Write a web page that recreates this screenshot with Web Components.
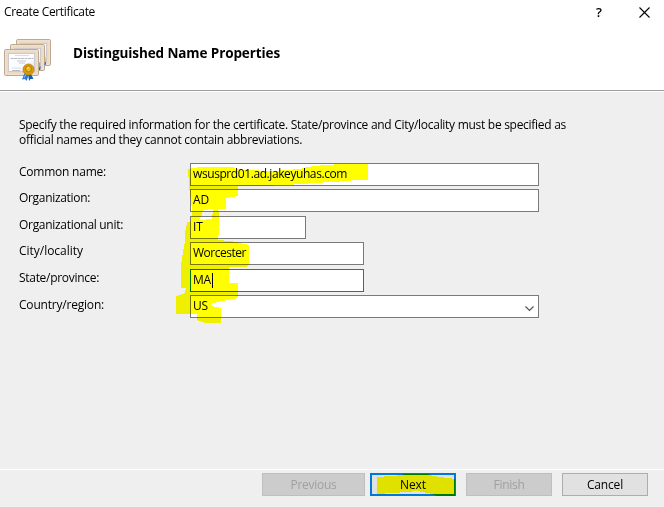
<!DOCTYPE html>
<html lang="en">
<head>
<meta charset="utf-8">
<title>Create Certificate</title>
<style>
html,body{margin:0;width:664px;height:507px;overflow:hidden}
body{font:12px/16px "Open Sans","Noto Sans",sans-serif;color:#000}
</style>
</head>
<body>
<cert-dialog></cert-dialog>
<script>
// Single line of text, tracked to an exact advance width.
class FitText extends HTMLElement {
  connectedCallback() {
    const root = this.attachShadow({mode: 'open'});
    root.innerHTML = '<style>:host{display:block;white-space:nowrap}span{display:inline-block}</style><span><slot></slot></span>';
    const span = root.querySelector('span');
    const target = parseFloat(this.getAttribute('w'));
    if (target) {
      const width = span.getBoundingClientRect().width;
      span.style.letterSpacing = (target - width) / this.textContent.length + 'px';
    }
  }
}
class CertIcon extends HTMLElement {
  connectedCallback() {
    this.attachShadow({mode: 'open'}).innerHTML = `<style>:host{display:block;width:49px;height:44px}svg{display:block}</style>
<svg width="49" height="44" viewBox="0 0 49 44">
<defs>
<linearGradient id="p" x1="0" y1="0" x2="1" y2="1"><stop offset="0" stop-color="#fff"/><stop offset=".6" stop-color="#fbfcff"/><stop offset="1" stop-color="#d4e0f2"/></linearGradient>
<g id="c"><rect x=".5" y=".5" width="34" height="26" rx="1.2" fill="#ead9c5" stroke="#bda992"/><rect x="1.8" y="1.8" width="31.4" height="23.4" fill="none" stroke="#f6eadc" stroke-dasharray="1.5 1"/><rect x="4.5" y="4.5" width="26" height="18" fill="url(#p)" stroke="#cfc9cb"/></g>
</defs>
<use href="#c" x="12" y="0"/>
<use href="#c" x="6" y="5"/><path d="M41 26l.5-3" stroke="#2769b8" stroke-width="1.200"/><path d="M41 18.500v4" stroke="#d8a52c"/>
<path d="M35.500 31l.5-3.500" stroke="#2769b8" stroke-width="1.500"/><path d="M35.500 23.500v4" stroke="#d8a52c" stroke-width="1.200"/>
<use href="#c" x="0" y="10"/>
<g stroke="#aaa9b5" stroke-width=".8"><path d="M11 16.500h14" stroke="#d5d3d9"/><path d="M6.500 19.500h23" stroke-dasharray="3 .5"/><path d="M13 22h9M15 24h6" stroke="#b7b7ca"/><path d="M8 31.500h8"/><path d="M8 29h9" stroke="#d5d3d9"/></g>
<path d="M21 33l-3 7.500 3-.5 1.500 2 3-8z" fill="#2a77cf"/><path d="M26.500 34l3 6-3 0-1.500 2-1-8z" fill="#175eb0"/><path d="M22 35l-2 4" stroke="#89bdf2"/>
<circle cx="24.500" cy="30.500" r="5.500" fill="#d99d0b" stroke="#bc7c05" stroke-width=".8"/><circle cx="24.500" cy="30" r="3" fill="#e9b922" stroke="#a76d05" stroke-width=".8"/><path d="M23 29.500l2-1.500" stroke="#ffe890"/>
</svg>`;
  }
}
class TitleBar extends HTMLElement {
  connectedCallback() {
    this.attachShadow({mode: 'open'}).innerHTML = `<style>
:host{display:flex;height:24px;box-sizing:border-box;align-items:center}
.q{margin-left:auto;width:8px;font-size:13px;font-weight:600;margin-right:35px}svg{margin-right:14px}fit-text{padding-left:4px}
</style><fit-text w="91">${this.getAttribute('text')}</fit-text><span class="q">?</span>
<svg width="11" height="11" viewBox="0 0 11 11"><path d="M.5.500l10 10M10.500.500l-10 10" stroke="#000" stroke-width="1.100"/></svg>`;
  }
}
class FormRow extends HTMLElement {
  connectedCallback() {
    const a = n => this.getAttribute(n);
    this.attachShadow({mode: 'open'}).innerHTML = `<style>
:host{display:flex;height:23px;align-items:flex-start}
.label{flex:0 0 171px;line-height:16px;padding-top:${a('dy') || 1}px}
.box{box-sizing:border-box;height:23px;border:1px solid #7a7a7a;background:#fff;padding:2px 8px 0 2px;display:flex;width:${a('box')}px}
:host([focused]) .box{border-color:#0078d7}
.caret{width:1px;height:15px;background:#000;margin:1px 0 0 1px}
svg{margin:8px -4px 0 auto}
</style><div class="label"><fit-text w="${a('lw')}">${a('label')}</fit-text></div>
<div class="box"><fit-text w="${a('vw')}">${a('value')}</fit-text>${this.hasAttribute('focused') ? '<i class="caret"></i>' : ''}${this.hasAttribute('select') ? '<svg width="9" height="6" viewBox="0 0 9 6"><path d="M.5.500l4 4 4-4" fill="none" stroke="#505050" stroke-width="1.100"/></svg>' : ''}</div>`;
  }
}
class PushButton extends HTMLElement {
  connectedCallback() {
    this.attachShadow({mode: 'open'}).innerHTML = `<style>
:host{display:flex;box-sizing:border-box;width:86px;height:23px;border:1px solid #adadad;background:#e1e1e1;justify-content:center;align-items:center}
:host([disabled]){background:#ccc;border-color:#bfbfbf;color:#a0a0a0}
:host([primary]){border:2px solid #0078d7}
:host([wide]){width:103px}
</style><fit-text w="${this.getAttribute('tw')}">${this.getAttribute('label')}</fit-text>`;
  }
}
// Translucent marker strokes laid over the form.
class MarkerInk extends HTMLElement {
  connectedCallback() {
    this.attachShadow({mode: 'open'}).innerHTML = `<style>:host{position:absolute;inset:0;mix-blend-mode:multiply;pointer-events:none}svg{display:block}</style>
<svg width="664" height="507" fill="#ff0" shape-rendering="crispEdges">
<path fill-rule="evenodd" d="M188 169L193 168L200 167H233L236 169L245 170L272 171L300 169L306 167L325 165L342 164H368V180H352L350 181L330 182L300 184L288 185L260 186H238V196L232 197L226 198V209L218 209V211L219 212V230L218 240L230 241L240 243L249 245V265L246 267H229V283H238V298L222 301L210 304L212 306L221 308V323H205L197 320V314H176V296L185 293L186 288H181V265L183 252L185 242V233L187 222H191L192 210L190 193L189 186V178L188 177ZM203 210L202 215L199 220L212 219L213 209Z"/>
<path d="M377 477L403 475V474H427L433 476L448 478L455 479V496H437L428 493L417 491L407 492L393 493L377 494Z"/>
</svg>`;
  }
}
class CertDialog extends HTMLElement {
  connectedCallback() {
    this.attachShadow({mode: 'open'}).innerHTML = `<style>
:host{display:flex;flex-direction:column;position:relative;isolation:isolate;width:664px;height:507px;background:#efefef}
header{background:#fff;height:90px;border-bottom:1px solid #a0a0a0;box-shadow:0 1px #fff}
.head{display:flex;padding:15px 0 0 4px}
h1{margin:5px 0 0 20px;font-size:13.5px;line-height:18px;font-weight:700}
main{flex:1;padding:26px 0 0 19px}
.intro{line-height:15px;height:30px}
.rows{display:grid;grid-template-rows:26px 27px 26px 27px 26px 23px;margin-top:16px}
footer{height:34px;border-top:1px solid #fff;display:flex;justify-content:flex-end;padding:3px 16px 0 0;gap:10px}
.pair{display:flex;gap:5px}
</style>
<header><title-bar text="Create Certificate"></title-bar>
<div class="head"><cert-icon></cert-icon><h1><fit-text w="207">Distinguished Name Properties</fit-text></h1></div></header>
<main><div class="intro"><fit-text w="547">Specify the required information for the certificate. State/province and City/locality must be specified as</fit-text><fit-text w="283">official names and they cannot contain abbreviations.</fit-text></div>
<div class="rows">
<form-row label="Common name:" lw="87" value="wsusprd01.ad.jakeyuhas.com" vw="154" box="349"></form-row>
<form-row label="Organization:" lw="71" value="AD" vw="16" box="349"></form-row>
<form-row label="Organizational unit:" lw="104" value="IT" vw="10" box="116"></form-row>
<form-row label="City/locality" lw="64" value="Worcester" vw="53" box="174"></form-row>
<form-row label="State/province:" lw="80" value="MA" vw="18" box="174" focused></form-row>
<form-row label="Country/region:" lw="85" value="US" vw="15" box="349" select dy="2"></form-row>
</div></main>
<footer><div class="pair"><push-button wide disabled label="Previous" tw="46"></push-button><push-button primary label="Next" tw="26"></push-button></div><push-button disabled label="Finish" tw="31"></push-button><push-button label="Cancel" tw="36"></push-button></footer>
<marker-ink></marker-ink>`;
  }
}
customElements.define('fit-text', FitText);
customElements.define('cert-icon', CertIcon);
customElements.define('title-bar', TitleBar);
customElements.define('form-row', FormRow);
customElements.define('push-button', PushButton);
customElements.define('marker-ink', MarkerInk);
customElements.define('cert-dialog', CertDialog);
</script>
</body>
</html>
